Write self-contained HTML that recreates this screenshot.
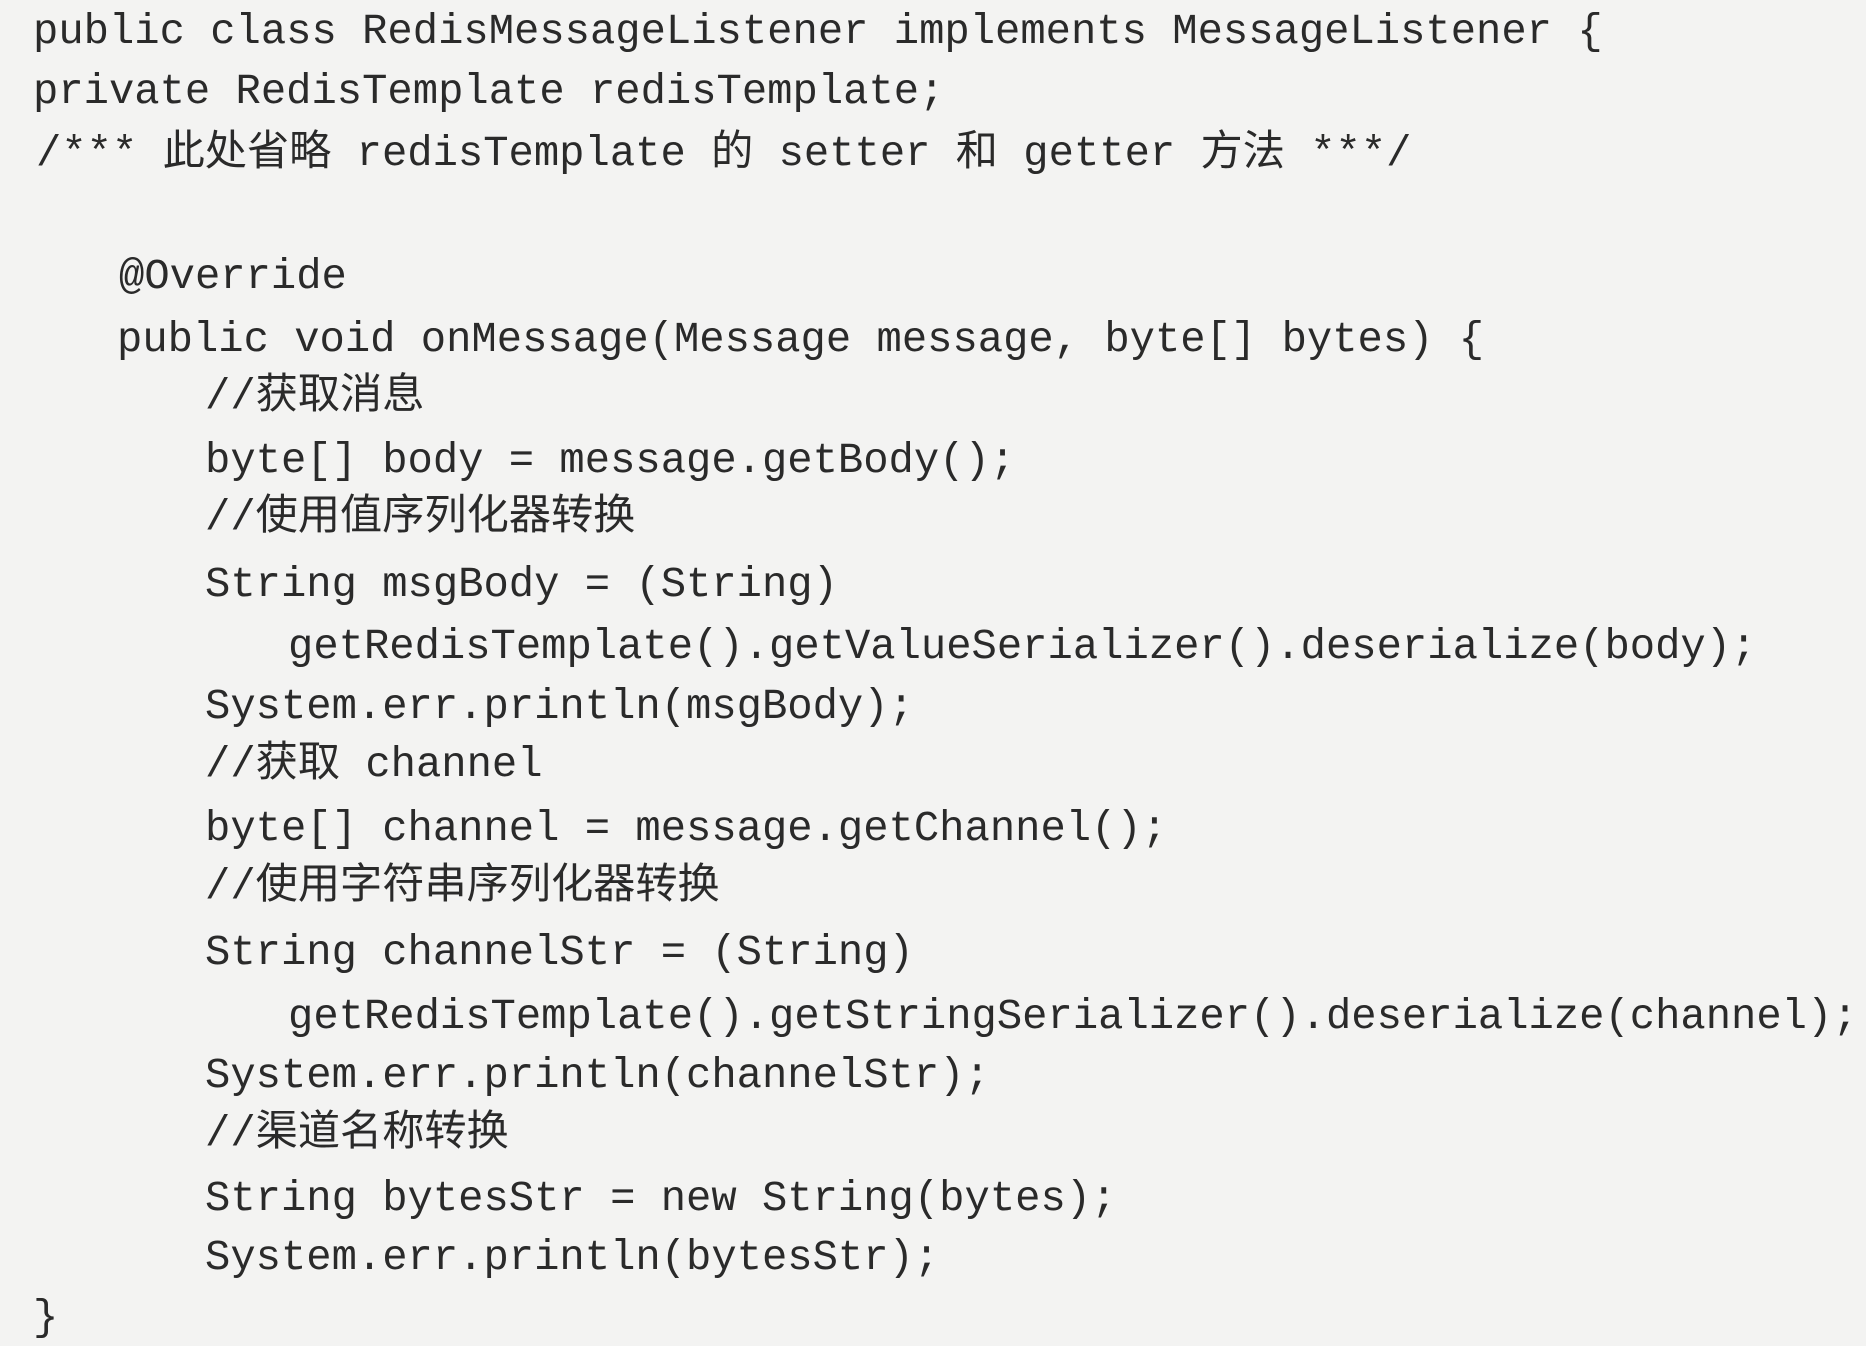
<!DOCTYPE html>
<html><head><meta charset="utf-8"><style>
html,body{margin:0;padding:0;}
body{width:1866px;height:1346px;background:#f3f3f2;position:relative;overflow:hidden;}
.l{position:absolute;white-space:pre;font-family:"Liberation Mono","Noto Sans CJK SC",monospace;font-size:42.2px;line-height:50px;color:#2a2a2a;}
</style></head><body>
<div class="l" style="left:33px;top:7px">public class RedisMessageListener implements MessageListener {</div>
<div class="l" style="left:33px;top:67px">private RedisTemplate redisTemplate;</div>
<div class="l" style="left:36px;top:129px">/*** 此处省略 redisTemplate 的 setter 和 getter 方法 ***/</div>
<div class="l" style="left:119px;top:252px">@Override</div>
<div class="l" style="left:117px;top:315px">public void onMessage(Message message, byte[] bytes) {</div>
<div class="l" style="left:205px;top:372px">//获取消息</div>
<div class="l" style="left:205px;top:436px">byte[] body = message.getBody();</div>
<div class="l" style="left:205px;top:493px">//使用值序列化器转换</div>
<div class="l" style="left:205px;top:560px">String msgBody = (String)</div>
<div class="l" style="left:288px;top:622px">getRedisTemplate().getValueSerializer().deserialize(body);</div>
<div class="l" style="left:205px;top:682px">System.err.println(msgBody);</div>
<div class="l" style="left:205px;top:740px">//获取 channel</div>
<div class="l" style="left:205px;top:804px">byte[] channel = message.getChannel();</div>
<div class="l" style="left:205px;top:862px">//使用字符串序列化器转换</div>
<div class="l" style="left:205px;top:928px">String channelStr = (String)</div>
<div class="l" style="left:288px;top:992px">getRedisTemplate().getStringSerializer().deserialize(channel);</div>
<div class="l" style="left:205px;top:1051px">System.err.println(channelStr);</div>
<div class="l" style="left:205px;top:1109px">//渠道名称转换</div>
<div class="l" style="left:205px;top:1174px">String bytesStr = new String(bytes);</div>
<div class="l" style="left:205px;top:1233px">System.err.println(bytesStr);</div>
<div class="l" style="left:33px;top:1293px">}</div>
</body></html>
